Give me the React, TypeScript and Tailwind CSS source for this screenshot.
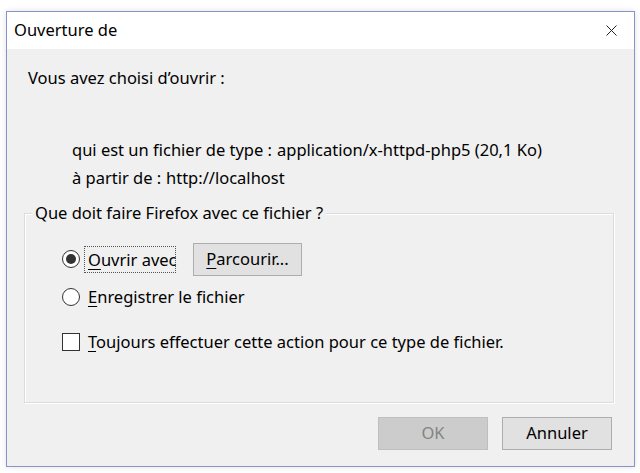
import React from "react";

const font = { fontFamily: '"Noto Sans", "Open Sans", sans-serif' };

function U({ c }: { c: string }) {
  return <span className="underline underline-offset-[3px] decoration-1">{c}</span>;
}

export default function App() {
  return (
    <div className="w-[640px] h-[473px] bg-white relative overflow-hidden" style={font}>
      <div className="absolute left-[6px] top-[11px] w-[629px] h-[456px] border border-[#8495cc] bg-[#f0f0f0] flex flex-col shadow-[0_0_6px_rgba(0,0,0,0.12)] text-[#000] text-[16.5px]">
        {/* title bar */}
        <div className="h-[37px] bg-white flex items-center justify-between pl-[7px] pr-[17px] shrink-0">
          <span className="text-[16.5px] text-black leading-none">Ouverture de</span>
          <svg width="11" height="11" viewBox="0 0 11 11">
            <path d="M0.5 0.5 L10.5 10.5 M10.5 0.5 L0.5 10.5" stroke="#222" strokeWidth="1" />
          </svg>
        </div>
        {/* content */}
        <div className="flex flex-col pl-[21px] pr-[19px] flex-1">
          <div className="mt-[19px] h-[20px] leading-[20px]">Vous avez choisi d’ouvrir :</div>
          <div className="mt-[48px] pl-[44px] flex flex-col">
            <div className="h-[28px] leading-[28px] flex">
              <span className="w-[205px]">qui est un fichier de type :</span>
              <span>application/x-httpd-php5 (20,1 Ko)</span>
            </div>
            <div className="h-[28px] leading-[28px] flex">
              <span className="w-[94px]">à partir de :</span>
              <span>http://localhost</span>
            </div>
          </div>
          {/* group box */}
          <div className="relative mt-[21px] ml-[-4px] w-[590px] h-[190px] border border-[#dcdcdc] shadow-[inset_1px_1px_0_#fff,1px_1px_0_#fff]">
            <div className="absolute left-[7px] top-[-11px] bg-[#f0f0f0] px-[3px] leading-[20px]">
              Que doit faire Firefox avec ce fichier ?
            </div>
            <div className="flex flex-col pl-[37px] pt-[28px]">
              <div className="flex items-center h-[34px]">
                <span className="w-[18px] h-[18px] rounded-full border border-[#333] bg-white flex items-center justify-center">
                  <span className="w-[10px] h-[10px] rounded-full bg-[#333]" />
                </span>
                <span className="ml-[4px] w-[92px] pl-[3px] h-[27px] leading-[25px] border border-dotted border-[#555] whitespace-nowrap overflow-visible">
                  <U c="O" />uvrir avec
                </span>
                <span className="ml-[17px] w-[109px] h-[33px] border border-[#adadad] bg-[#e1e1e1] flex items-center justify-center">
                  <span><U c="P" />arcourir...</span>
                </span>
              </div>
              <div className="flex items-center h-[24px] mt-[9px]">
                <span className="w-[18px] h-[18px] rounded-full border border-[#333] bg-white" />
                <span className="ml-[8px]"><U c="E" />nregistrer le fichier</span>
              </div>
              <div className="flex items-center h-[24px] mt-[21px]">
                <span className="w-[18px] h-[18px] border border-[#333] bg-white" />
                <span className="ml-[8px]"><U c="T" />oujours effectuer cette action pour ce type de fichier.</span>
              </div>
            </div>
          </div>
          {/* buttons */}
          <div className="flex justify-end gap-[14px] mt-[14px] pr-[3px]">
            <div className="w-[110px] h-[33px] border border-[#bfbfbf] bg-[#cccccc] text-[#838383] flex items-center justify-center">OK</div>
            <div className="w-[110px] h-[33px] border border-[#adadad] bg-[#e1e1e1] flex items-center justify-center">Annuler</div>
          </div>
        </div>
      </div>
    </div>
  );
}
